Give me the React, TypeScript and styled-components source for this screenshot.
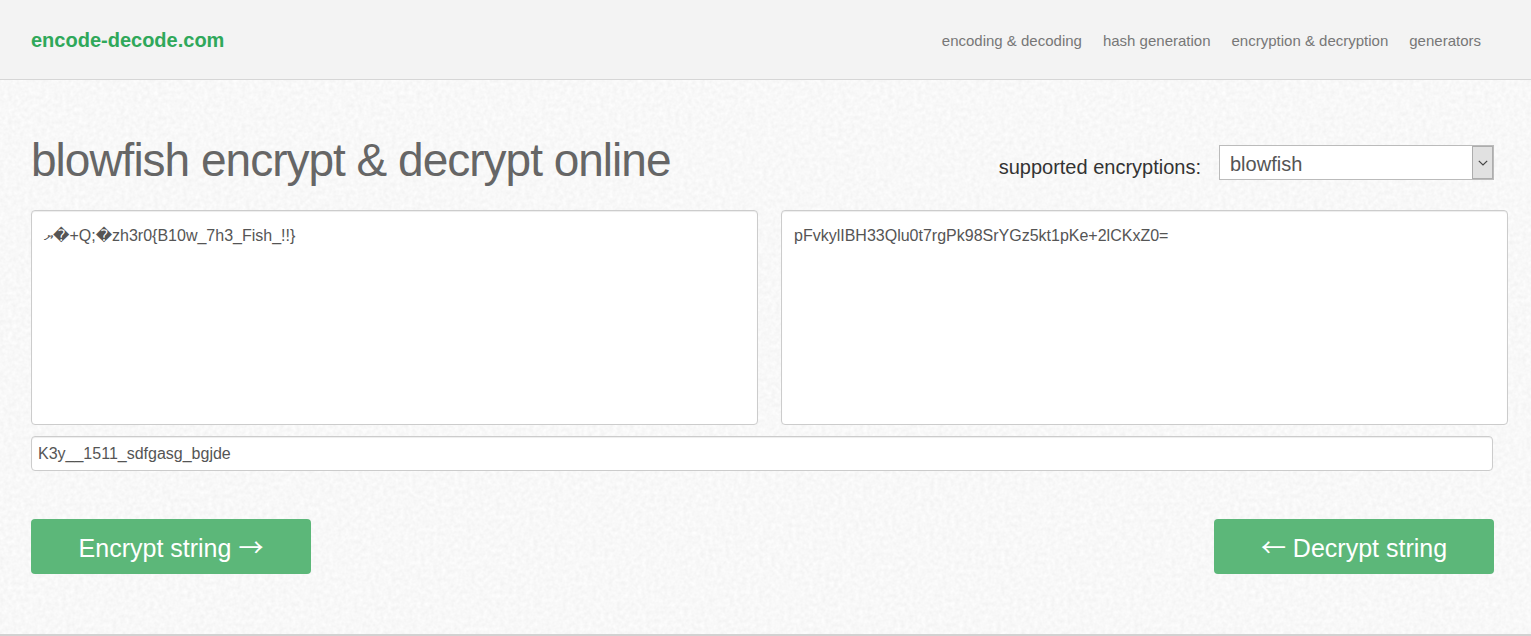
import React, { useState } from "react";
import styled, { createGlobalStyle } from "styled-components";

const GlobalStyle = createGlobalStyle`
  *, *::before, *::after { box-sizing: border-box; }
  html { background: #f7f7f7; }
  body {
    margin: 0;
    color: #333;
    font-family: Arial, "Liberation Sans", "DejaVu Sans", sans-serif;
    font-size: 16px;
    line-height: 20px;
  }
`;

const Page = styled.div`
  position: relative;
  isolation: isolate;
`;

const PaperTexture = styled.svg`
  position: absolute;
  inset: 0;
  z-index: -1;
  width: 100%;
  height: 100%;
`;

const Header = styled.header`
  display: flex;
  align-items: center;
  justify-content: space-between;
  min-height: 80px;
  padding: 0 50px 0 31px;
  background: #f3f3f3;
  border-bottom: 1px solid #d6d6d6;
`;

const Brand = styled.a`
  color: #2fa85a;
  font-size: 20px;
  font-weight: bold;
  text-decoration: none;
`;

const Nav = styled.nav`
  display: flex;
  gap: 21px;
  padding-top: 2px;
`;

const NavLink = styled.a`
  color: #777;
  font-size: 15px;
  text-decoration: none;
`;

const Main = styled.main`
  padding: 50px 23px 60px 31px;
  border-bottom: 2px solid #d2d2d2;
`;

const TitleRow = styled.div`
  display: flex;
  align-items: center;
  justify-content: space-between;
  padding-right: 14px;
  margin-bottom: 20px;
`;

const Title = styled.h1`
  margin: 0;
  color: #666;
  font-size: 46px;
  font-weight: normal;
  letter-spacing: -1px;
  line-height: 60px;
`;

const Picker = styled.div`
  display: flex;
  align-items: center;
  gap: 18px;
  padding-top: 5px;
`;

const PickerLabel = styled.label`
  padding-top: 9px;
  font-size: 20px;
`;

const SelectBox = styled.div`
  position: relative;
  width: 275px;
`;

const Select = styled.select`
  display: block;
  width: 100%;
  height: 35px;
  padding: 2px 30px 0 10px;
  appearance: none;
  background: #fff;
  border: 1px solid #bbb;
  border-radius: 0;
  color: #555;
  font: inherit;
  font-size: 20px;
`;

const SelectArrow = styled.span`
  position: absolute;
  top: 1px;
  right: 1px;
  bottom: 1px;
  display: grid;
  place-items: center;
  width: 21px;
  background: #e1e1e1;
  border: 1px solid #adadad;
  pointer-events: none;
`;

const Texts = styled.div`
  display: grid;
  grid-template-columns: 1fr 1fr;
  gap: 23px;
  margin-bottom: 11px;
`;

const TextArea = styled.textarea`
  display: block;
  width: 100%;
  height: 215px;
  padding: 15px 12px;
  background: #fff;
  border: 1px solid #ccc;
  border-radius: 4px;
  box-shadow: inset 0 1px 1px rgba(0, 0, 0, 0.075);
  color: #555;
  font: inherit;
  resize: none;
`;

const KeyRow = styled.div`
  padding-right: 15px;
  margin-bottom: 48px;
`;

const KeyInput = styled.input`
  display: block;
  width: 100%;
  height: 35px;
  padding: 4px 6px;
  background: #fff;
  border: 1px solid #ccc;
  border-radius: 4px;
  box-shadow: inset 0 1px 1px rgba(0, 0, 0, 0.075);
  color: #555;
  font: inherit;
`;

const Actions = styled.div`
  display: flex;
  justify-content: space-between;
  padding-right: 14px;
`;

const ActionButton = styled.button`
  width: 280px;
  height: 55px;
  padding: 2px 0 0;
  background: #5cb779;
  border: 0;
  border-radius: 4px;
  color: #fff;
  font: inherit;
  font-size: 25px;
  line-height: 30px;
  cursor: pointer;
`;

const Arrow = styled.span`
  font-family: "Noto Sans CJK JP", sans-serif;
  line-height: 1;
`;

const links = [
  "encoding & decoding",
  "hash generation",
  "encryption & decryption",
  "generators",
];

export default function App() {
  const [plain, setPlain] = useState("\u0794\uFFFD+Q;\uFFFDzh3r0{B10w_7h3_Fish_!!}");
  const [cipher, setCipher] = useState("pFvkylIBH33Qlu0t7rgPk98SrYGz5kt1pKe+2lCKxZ0=");
  const [key, setKey] = useState("K3y__1511_sdfgasg_bgjde");

  return (
    <Page>
      <GlobalStyle />
      <PaperTexture aria-hidden="true">
        <filter id="paper" x="0" y="0" width="100%" height="100%" colorInterpolationFilters="sRGB">
          <feTurbulence type="fractalNoise" baseFrequency="0.24" numOctaves="2" seed="4" stitchTiles="stitch" />
          <feColorMatrix
            values="0.06 0 0 0 0.943
                    0.06 0 0 0 0.943
                    0.06 0 0 0 0.943
                    0 0 0 0 1"
          />
        </filter>
        <rect width="100%" height="100%" filter="url(#paper)" />
      </PaperTexture>
      <Header>
        <Brand href="#">encode-decode.com</Brand>
        <Nav>
          {links.map((link) => (
            <NavLink key={link} href="#">{link}</NavLink>
          ))}
        </Nav>
      </Header>
      <Main>
        <TitleRow>
          <Title>blowfish encrypt &amp; decrypt online</Title>
          <Picker>
            <PickerLabel htmlFor="encryption">supported encryptions:</PickerLabel>
            <SelectBox>
              <Select id="encryption" defaultValue="blowfish">
                <option>blowfish</option>
              </Select>
              <SelectArrow>
                <svg width="10" height="6" viewBox="0 0 10 6" fill="none" stroke="#444" strokeWidth="1.2">
                  <path d="M0.8 0.8 5 5 9.2 0.8" />
                </svg>
              </SelectArrow>
            </SelectBox>
          </Picker>
        </TitleRow>
        <Texts>
          <TextArea
            aria-label="Decrypted string"
            spellCheck={false}
            value={plain}
            onChange={(e) => setPlain(e.target.value)}
          />
          <TextArea
            aria-label="Encrypted string"
            spellCheck={false}
            value={cipher}
            onChange={(e) => setCipher(e.target.value)}
          />
        </Texts>
        <KeyRow>
          <KeyInput
            aria-label="Key"
            type="text"
            spellCheck={false}
            value={key}
            onChange={(e) => setKey(e.target.value)}
          />
        </KeyRow>
        <Actions>
          <ActionButton type="button">Encrypt string <Arrow>→</Arrow></ActionButton>
          <ActionButton type="button"><Arrow>←</Arrow> Decrypt string</ActionButton>
        </Actions>
      </Main>
    </Page>
  );
}
